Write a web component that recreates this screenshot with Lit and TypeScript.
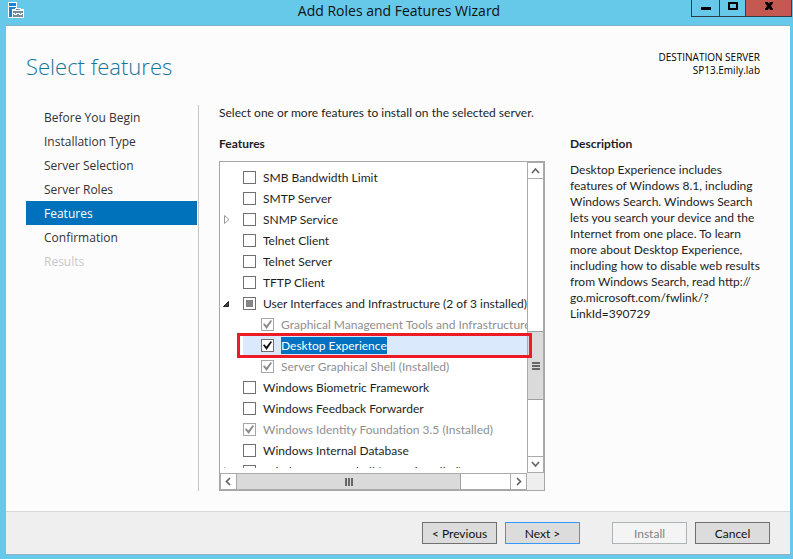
import { LitElement, html, css, svg, nothing } from "lit";
import { customElement, property } from "lit/decorators.js";
import { classMap } from "lit/directives/class-map.js";

type CheckState = "off" | "on" | "mixed";

interface Feature {
  label: string;
  check?: CheckState;
  locked?: boolean;
  child?: boolean;
  selected?: boolean;
  expander?: "open" | "closed";
}

const FEATURES: Feature[] = [
  { label: "SMB Bandwidth Limit" },
  { label: "SMTP Server" },
  { label: "SNMP Service", expander: "closed" },
  { label: "Telnet Client" },
  { label: "Telnet Server" },
  { label: "TFTP Client" },
  { label: "User Interfaces and Infrastructure (2 of 3 installed)", check: "mixed", expander: "open" },
  { label: "Graphical Management Tools and Infrastructure (Installed)", check: "on", locked: true, child: true },
  { label: "Desktop Experience", check: "on", child: true, selected: true },
  { label: "Server Graphical Shell (Installed)", check: "on", locked: true, child: true },
  { label: "Windows Biometric Framework" },
  { label: "Windows Feedback Forwarder" },
  { label: "Windows Identity Foundation 3.5 (Installed)", check: "on", locked: true },
  { label: "Windows Internal Database" },
  { label: "Windows PowerShell (2 of 5 installed)", expander: "closed" },
];

const STEPS = [
  "Before You Begin",
  "Installation Type",
  "Server Selection",
  "Server Roles",
  "Features",
  "Confirmation",
  "Results",
];

@customElement("feature-row")
class FeatureRow extends LitElement {
  @property({ attribute: false }) feature!: Feature;

  static styles = css`
    :host {
      display: block;
    }
    .row {
      display: flex;
      align-items: center;
      height: 21px;
      white-space: nowrap;
    }
    .twisty {
      flex: none;
      width: 23px;
      height: 21px;
      padding: 0;
      border: 0;
      background: none;
    }
    .twisty svg {
      display: block;
      margin-left: 2px;
    }
    .item {
      flex: 1;
      display: flex;
      align-items: center;
      gap: 7px;
      height: 21px;
    }
    .child .item {
      margin-left: 18px;
    }
    .selected .item {
      margin-left: 0;
      padding-left: 18px;
      background: #dbe9fd;
    }
    .box {
      appearance: none;
      flex: none;
      display: grid;
      place-items: center;
      box-sizing: border-box;
      width: 13px;
      height: 13px;
      margin: 0;
      border: 1px solid #707070;
      background: #fff;
    }
    .box:disabled {
      border-color: #a6a6a6;
    }
    .box:checked::before {
      content: "";
      width: 9px;
      height: 9px;
      background: #111;
      clip-path: polygon(0 48%, 14% 36%, 38% 60%, 86% 0, 100% 12%, 40% 100%);
    }
    .box:disabled::before {
      background: #8a8a8a;
    }
    .box:indeterminate::before {
      content: "";
      width: 7px;
      height: 7px;
      background: #858585;
    }
    .locked .text {
      color: #8f8f8f;
    }
    .selected .text {
      background: #0072c0;
      color: #fff;
    }
    .text {
      line-height: 17px;
    }
  `;

  render() {
    const f = this.feature;
    return html`
      <div class=${classMap({ row: true, child: !!f.child, selected: !!f.selected, locked: !!f.locked })}>
        ${f.expander
          ? html`<button class="twisty" aria-label="Expand or collapse" aria-expanded=${f.expander === "open"}>
              <svg width="10" height="11" viewBox="0 0 10 11">
                ${f.expander === "open"
                  ? svg`<path d="M6.500 3.500v5h-5z" fill="#444" stroke="#222" />`
                  : svg`<path d="M2.500 1.500v8l4.500-4z" fill="#fff" stroke="#999" />`}
              </svg>
            </button>`
          : html`<span class="twisty"></span>`}
        <label class="item">
          <input
            class="box"
            type="checkbox"
            .checked=${f.check === "on"}
            .indeterminate=${f.check === "mixed"}
            ?disabled=${!!f.locked}
          />
          <span class="text">${f.label}</span>
        </label>
      </div>
    `;
  }
}

@customElement("app-root")
class AppRoot extends LitElement {
  static styles = css`
    :host {
      display: flex;
      flex-direction: column;
      box-sizing: border-box;
      height: 100vh;
      padding: 0 3px 4px 6px;
      background: #66c9ea;
      color: #1e1e1e;
      font: 12px/16px Lato, "Open Sans", sans-serif;
      overflow: hidden;
    }
    button {
      font: inherit;
      color: inherit;
    }
    .titlebar {
      flex: none;
      display: grid;
      grid-template-columns: 101px 1fr 101px;
      height: 25px;
      margin-right: -2px;
    }
    .appicon {
      margin: 2px;
    }
    .title,
    .heading,
    .server,
    .steps {
      font-family: "Open Sans", "Noto Sans", sans-serif;
    }
    .title {
      margin: 0;
      font-size: 14px;
      font-weight: 400;
      line-height: 22px;
      text-align: center;
      color: #111;
    }
    .winbuttons {
      display: grid;
      grid-template-columns: 28px 26px 1fr;
      height: 17px;
    }
    .win {
      display: grid;
      place-items: center;
      box-sizing: border-box;
      padding: 0;
      border: 1px solid #2b3d45;
      border-width: 0 0 1px 1px;
      background: none;
    }
    .close {
      border-right-width: 1px;
      background: #c35950;
    }
    .page {
      flex: 1;
      min-height: 0;
      display: flex;
      flex-direction: column;
      border-top: 1px solid #7fb4c8;
      border-bottom: 1px solid #8fb3c2;
      background: #fcfcfc;
    }
    .head {
      display: flex;
      justify-content: space-between;
      padding: 25px 30px 0 20px;
      height: 54px;
    }
    .heading {
      margin: 0;
      font-size: 22px;
      font-weight: 300;
      line-height: 30px;
      color: #16759a;
    }
    .server {
      margin: 0;
      font-size: 10px;
      line-height: 13px;
      text-align: right;
      color: #000;
    }
    .body {
      flex: 1;
      min-height: 0;
      display: grid;
      grid-template-columns: 173px minmax(0, 1fr) 200px;
      padding: 0 20px 20px;
    }
    .steps {
      display: flex;
      flex-direction: column;
      border-right: 1px solid #c6c6c6;
    }
    .step {
      margin-right: 1px;
      padding: 2px 0 0 18px;
      line-height: 22px;
      color: #333;
      text-decoration: none;
    }
    .current {
      background: #0072bc;
      color: #fff;
    }
    .pending {
      color: #c8c8c8;
    }
    .choose {
      min-height: 0;
      display: flex;
      flex-direction: column;
      padding: 0 25px 0 20px;
    }
    .prompt {
      margin: 0 0 15px;
      white-space: nowrap;
    }
    .label {
      margin: 0 0 9px;
      font-size: 12px;
      line-height: 16px;
      font-weight: 700;
    }
    .list {
      flex: 1;
      min-height: 0;
      position: relative;
      display: grid;
      grid-template: minmax(0, 1fr) 17px / minmax(0, 1fr) 17px;
      border: 1px solid #a6a6a6;
      background: #fff;
    }
    .rows {
      overflow: hidden;
      margin-bottom: 5px;
      padding-top: 5px;
    }
    .marker {
      position: absolute;
      top: 171px;
      left: 17px;
      right: 12px;
      height: 19px;
      border: 3px solid #ed1c24;
      pointer-events: none;
    }
    .vbar,
    .hbar {
      display: flex;
      box-sizing: border-box;
      border: 0 solid #ababab;
    }
    .vbar {
      flex-direction: column;
      border-width: 0 1px;
    }
    .hbar {
      border-width: 1px 0;
    }
    .arrow {
      flex: none;
      display: grid;
      place-items: center;
      box-sizing: border-box;
      padding: 0;
      border: 0 solid #ababab;
      background: #fff;
    }
    .vbar .arrow {
      height: 17px;
      border-width: 1px 0;
    }
    .hbar .arrow {
      width: 17px;
      border-width: 0 1px;
    }
    .thumb {
      display: grid;
      place-items: center;
      box-sizing: border-box;
      border: 0 solid #a0a0a0;
      background: #dadada;
    }
    .vbar .thumb {
      flex: 68;
      border-width: 1px 0;
    }
    .hbar .thumb {
      flex: 224;
      border-right-width: 1px;
    }
    .above {
      flex: 153;
    }
    .below {
      flex: 56;
    }
    .beyond {
      flex: 49;
    }
    .corner {
      background: #eee;
    }
    .about {
      margin: 31px 4px 0 0;
    }
    .about .label {
      margin-bottom: 10px;
    }
    .about p {
      margin: 0;
    }
    .foot {
      flex: none;
      display: flex;
      justify-content: flex-end;
      gap: 8px;
      padding: 10px 20px;
      border-top: 1px solid #dadada;
      background: #efefef;
    }
    .btn {
      box-sizing: border-box;
      width: 75px;
      height: 22px;
      padding: 2px 0 0;
      border: 1px solid #707070;
      background: #dcdcdc;
      line-height: 18px;
      color: #111;
    }
    .default {
      border-color: #3399ff;
    }
    .install {
      margin-left: 24px;
    }
    .btn:disabled {
      border-color: #adb2b5;
      background: #f4f4f4;
      color: #838383;
    }
  `;

  private arrow(name: string, d: string) {
    return html`<button class="arrow" aria-label=${name}>
      <svg width="9" height="9" viewBox="0 0 9 9"><path d=${d} fill="none" stroke="#666" stroke-width="1.700" /></svg>
    </button>`;
  }

  render() {
    return html`
      <header class="titlebar">
        <svg class="appicon" width="16" height="16" viewBox="0 0 16 16">
          <path d="M0 0h9v7h7v9H0z" fill="#fff" />
          <path d="M9 0h7v7H9z" fill="#66c9ea" />
          <path d="M1 1h7v3H1zM1 5h7v2H4v8H1z" fill="#1e82d2" />
          <path d="M4 10l1-2h2V6h6v2h2l1 2v5H4z" fill="#fff" />
          <path d="M5 9h10v2h-2v1h-1v-1H8v1H7v-1H5zM5 12h1v1h3v-1h2v1h3v-1h1v3H5zM8 7h4v1H8z" fill="#748c9b" />
        </svg>
        <h1 class="title">Add Roles and Features Wizard</h1>
        <div class="winbuttons">
          <button class="win" aria-label="Minimize">
            <svg width="12" height="12" viewBox="0 0 12 12"><path d="M1 5h10v3H1z" /></svg>
          </button>
          <button class="win" aria-label="Maximize">
            <svg width="12" height="12" viewBox="0 0 12 12">
              <path d="M1 0h10v8H1zM3 2v4h6V2z" fill-rule="evenodd" />
            </svg>
          </button>
          <button class="win close" aria-label="Close">
            <svg width="12" height="12" viewBox="0 0 12 12">
              <path d="M2 0h3l1 2 1-2h3v1L8 4l2 3v1H7L6 6 5 8H2V7l2-3-2-3z" />
            </svg>
          </button>
        </div>
      </header>
      <main class="page">
        <div class="head">
          <h2 class="heading">Select features</h2>
          <p class="server">DESTINATION SERVER<br />SP13.Emily.lab</p>
        </div>
        <div class="body">
          <nav class="steps">
            ${STEPS.map(
              (s) => html`<a
                href="#"
                class=${classMap({ step: true, current: s === "Features", pending: s === "Results" })}
                aria-current=${s === "Features" ? "step" : nothing}
                >${s}</a
              >`
            )}
          </nav>
          <section class="choose">
            <p class="prompt">Select one or more features to install on the selected server.</p>
            <h3 class="label">Features</h3>
            <div class="list">
              <div class="rows">
                ${FEATURES.map((f) => html`<feature-row .feature=${f}></feature-row>`)}
              </div>
              <div class="vbar">
                ${this.arrow("Scroll up", "M1 7l3.500-4 3.500 4")}
                <span class="above"></span>
                <span class="thumb">
                  <svg width="8" height="8" viewBox="0 0 8 8"><path d="M0 0h8v2H0zM0 3h8v2H0zM0 6h8v2H0z" fill="#666" /></svg>
                </span>
                <span class="below"></span>
                ${this.arrow("Scroll down", "M1 2l3.500 4 3.500-4")}
              </div>
              <div class="hbar">
                ${this.arrow("Scroll left", "M6 1l-3.500 3.500 3.500 3.500")}
                <span class="thumb">
                  <svg width="8" height="8" viewBox="0 0 8 8"><path d="M0 0h2v8H0zM3 0h2v8H3zM6 0h2v8H6z" fill="#666" /></svg>
                </span>
                <span class="beyond"></span>
                ${this.arrow("Scroll right", "M3 1l3.500 3.500-3.500 3.500")}
              </div>
              <div class="corner"></div>
              <div class="marker"></div>
            </div>
          </section>
          <aside class="about">
            <h3 class="label">Description</h3>
            <p>
              Desktop Experience includes features of Windows 8.1, including Windows Search. Windows Search lets you
              search your device and the Internet from one place. To learn more about Desktop Experience, including how
              to disable web results from Windows Search, read http://<wbr />go.microsoft.com/fwlink/?<wbr />LinkId=390729
            </p>
          </aside>
        </div>
        <footer class="foot">
          <button class="btn">&lt; Previous</button>
          <button class="btn default">Next &gt;</button>
          <button class="btn install" disabled>Install</button>
          <button class="btn">Cancel</button>
        </footer>
      </main>
    `;
  }
}
